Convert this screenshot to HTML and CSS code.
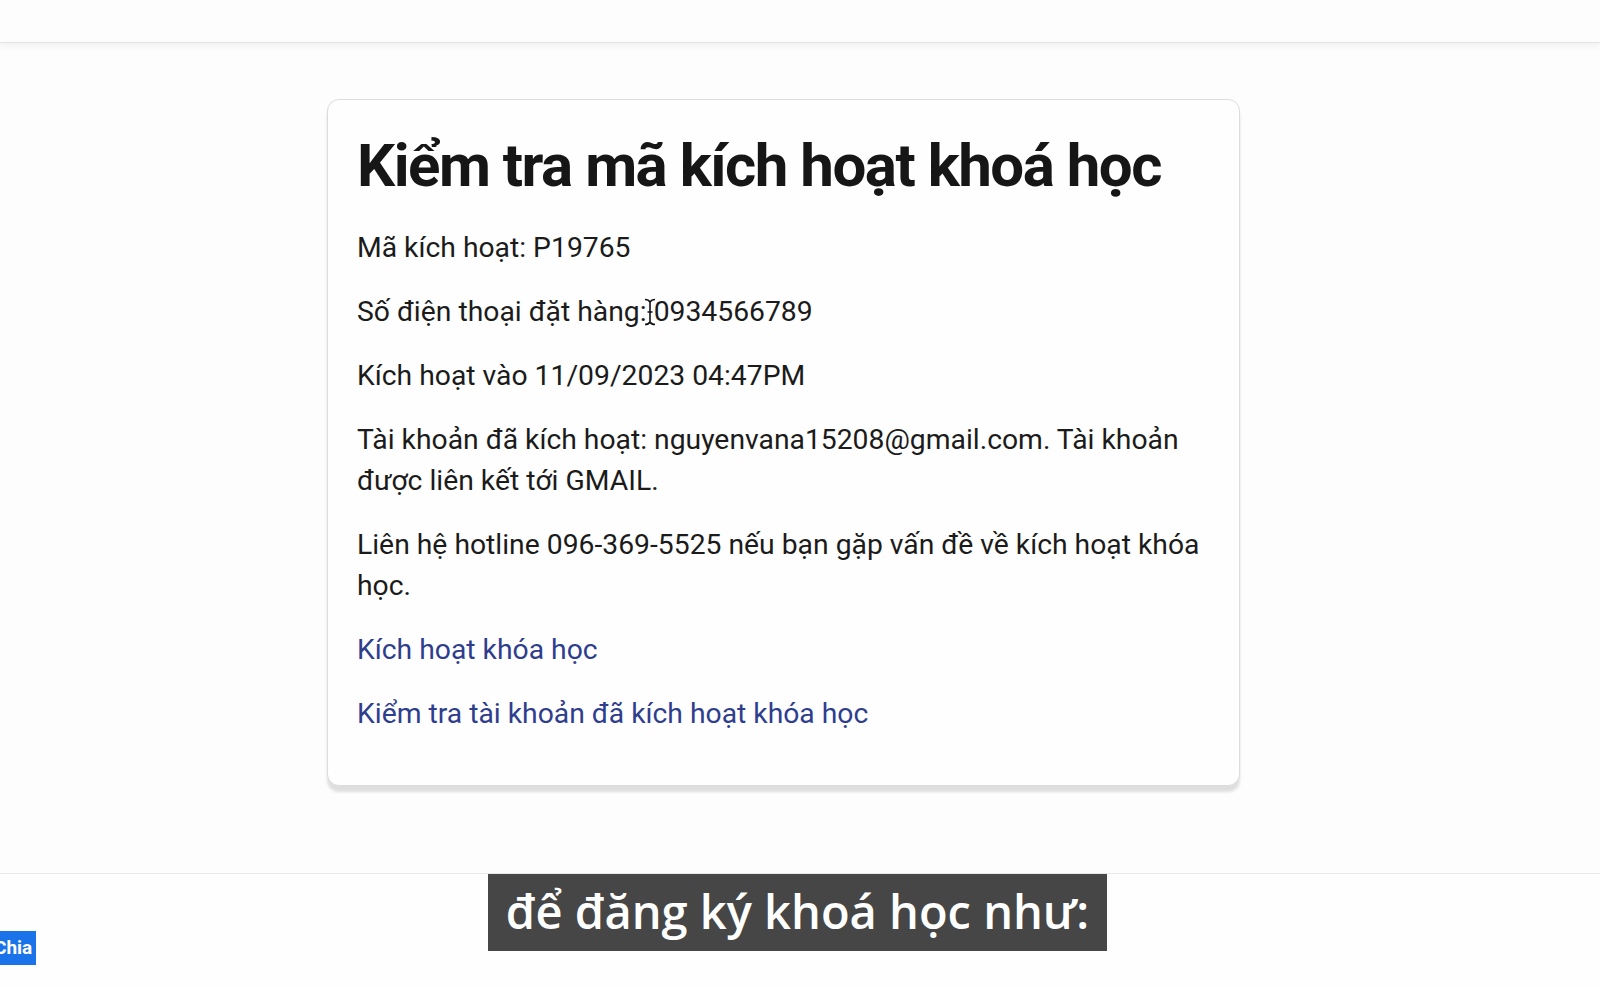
FILE: index.html
```html
<!DOCTYPE html>
<html lang="vi">
<head>
  <meta charset="UTF-8">
  <title>Kiểm tra mã kích hoạt khoá học</title>
  <link rel="stylesheet" href="styles.css">
</head>
<body>
  <header class="topbar"></header>
  <main class="page">
    <div class="card">
      <h1 class="card-title">Kiểm tra mã kích hoạt khoá học</h1>
      <p>Mã kích hoạt: P19765</p>
      <p class="phone">Số điện thoại đặt hàng:<span class="caret-wrap"><svg class="ibeam" width="12" height="28" viewBox="0 0 12 28"><path d="M1 1.5c2.5 0 4 .8 5 2.5 1-1.7 2.5-2.5 5-2.5M6 4v20M1 26.5c2.5 0 4-.8 5-2.5 1 1.7 2.5 2.5 5 2.5M3.5 14h5" fill="none" stroke="#111" stroke-width="1.6"/></svg></span> 0934566789</p>
      <p>Kích hoạt vào 11/09/2023 04:47PM</p>
      <p>Tài khoản đã kích hoạt: nguyenvana15208@gmail.com. Tài khoản được liên kết tới GMAIL.</p>
      <p>Liên hệ hotline 096-369-5525 nếu bạn gặp vấn đề về kích hoạt khóa học.</p>
      <p><a href="#">Kích hoạt khóa học</a></p>
      <p><a href="#">Kiểm tra tài khoản đã kích hoạt khóa học</a></p>
    </div>
  </main>
  <footer class="footer">
    <span class="share-btn">Chia</span>
    <div class="caption">để đăng ký khoá học như:</div>
  </footer>
</body>
</html>
```

FILE: styles.css
```css
body {
  margin: 0;
  background: #fdfdfd;
  font-family: Roboto, "Liberation Sans", sans-serif;
  color: #1b1b1b;
}
.topbar {
  height: 42px;
  border-bottom: 1px solid #e4e4e4;
  box-shadow: 0 3px 6px rgba(0,0,0,0.05);
  background: #fdfdfd;
}
.page {
  height: 830px;
  padding-top: 56px;
  box-sizing: border-box;
}
.card {
  margin-left: 327px;
  width: 913px;
  box-sizing: border-box;
  border: 1px solid #dcdcdc;
  border-radius: 12px;
  background: #fefefe;
  padding: 29px 27px 28px 29px;
  box-shadow: 0 6px 3px rgba(0,0,0,0.12);
}
.card-title {
  margin: 0 0 24px;
  font-size: 60px;
  line-height: 74px;
  letter-spacing: -1.5px;
  font-weight: 700;
  color: #161616;
  white-space: nowrap;
}
.card p {
  margin: 0 0 23px;
  font-size: 28.3px;
  line-height: 41px;
}
.card a {
  color: #2e3d8d;
  text-decoration: none;
}
.caret-wrap {
  position: relative;
  display: inline-block;
  width: 0;
}
.ibeam {
  position: absolute;
  left: -3px;
  top: -23px;
}
.footer {
  position: relative;
  height: 114px;
  border-top: 1px solid #e8e8e8;
  background: #fefefe;
}
.share-btn {
  position: absolute;
  left: -11px;
  top: 57px;
  height: 34px;
  padding: 0 4px 0 5px;
  background: #1a73e8;
  color: #fff;
  font-weight: 700;
  font-size: 19px;
  line-height: 34px;
}
.caption {
  position: absolute;
  left: 488px;
  top: 0;
  width: 619px;
  height: 77px;
  background: #464646;
  color: #fff;
  font-family: "Open Sans", sans-serif;
  font-weight: 600;
  font-size: 47px;
  line-height: 75px;
  text-align: center;
}
```
